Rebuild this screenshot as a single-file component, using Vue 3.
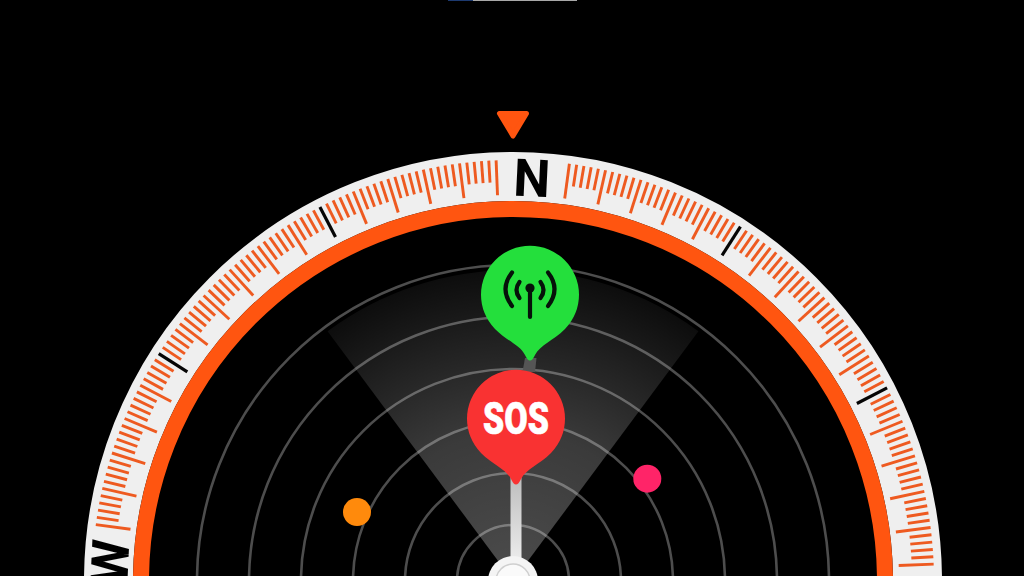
<template>
  <div class="screen">
    <svg class="dial" viewBox="0 0 1024 576" width="1024" height="576">
      <defs>
        <radialGradient id="coneFill" gradientUnits="userSpaceOnUse" :cx="cx" :cy="cy" r="312">
          <stop offset="0" stop-color="#fff" stop-opacity="0.3" />
          <stop offset="0.48" stop-color="#fff" stop-opacity="0.23" />
          <stop offset="1" stop-color="#fff" stop-opacity="0.05" />
        </radialGradient>
        <linearGradient id="stemFill" x1="0" y1="0" x2="0" y2="1">
          <stop offset="0" stop-color="#bdbdbd" />
          <stop offset="1" stop-color="#f0f0f0" />
        </linearGradient>
      </defs>

      <!-- top edge of the video frame -->
      <rect class="top-blue" x="448" y="0" width="25" height="1" />
      <rect class="top-grey" x="473" y="0" width="104" height="1" />

      <!-- heading marker -->
      <path class="marker" d="M499.5 113.5 H526.5 L513 136 Z" />

      <!-- bezel -->
      <circle class="band" :cx="cx" :cy="cy" r="404.5" />
      <circle class="ring-orange" :cx="cx" :cy="cy" r="372" />
      <line
        v-for="t in ticks"
        :key="t.deg"
        :class="t.cls"
        :x1="t.x1"
        :y1="t.y1"
        :x2="t.x2"
        :y2="t.y2"
      />
      <text
        v-for="c in cardinals"
        :key="c.label"
        class="cardinal"
        :x="c.x"
        :y="c.y"
        :transform="`rotate(${c.deg} ${c.x} ${c.y})`"
        text-anchor="middle"
      >{{ c.label }}</text>

      <!-- radar -->
      <path class="cone" fill="url(#coneFill)" :d="conePath" />
      <circle v-for="r in rings" :key="r" class="ring" :cx="cx" :cy="cy" :r="r" />

      <circle class="dot-orange" cx="357" cy="512" r="14" />
      <circle class="dot-pink" cx="647.3" cy="478.7" r="14" />

      <!-- links between pins -->
      <path class="link" d="M525 358 L536.5 358 L535 372 L522.5 372 Z" />
      <rect x="510.5" y="476" width="11" height="92" fill="url(#stemFill)" />

      <!-- centre knob -->
      <circle class="knob" :cx="cx" :cy="cy" r="25" />
      <circle class="knob-inner" :cx="cx" :cy="cy" r="17" />

      <!-- green pin -->
      <g transform="translate(530 295)">
        <path class="pin-green" :d="pinPath" />
        <circle class="ant-dot" cx="0" cy="-7" r="4.6" />
        <line class="ant" x1="0" y1="-6" x2="0" y2="22" />
        <path class="ant" d="M-10.5 -13 Q-16.5 -5 -10.5 3" />
        <path class="ant" d="M10.5 -13 Q16.5 -5 10.5 3" />
        <path class="ant" d="M-18 -22.5 Q-31 -6 -18 11" />
        <path class="ant" d="M18 -22.5 Q31 -6 18 11" />
      </g>

      <!-- red pin -->
      <g transform="translate(516 419)">
        <path class="pin-red" :d="pinPath" />
        <text class="sos" x="0" y="15" text-anchor="middle" textLength="66" lengthAdjust="spacingAndGlyphs">SOS</text>
      </g>
    </svg>
  </div>
</template>

<script setup>
const cx = 513;
const cy = 581;
const north = 2.7;
const rings = [56, 108, 160, 212, 264, 316];

// pin: circle that pulls in to a small rounded tip
const pinPath =
  "M-35 34 A49 49 0 1 1 35 34 C23 46 10 50 5 60 Q2.5 65.5 0 65.5 Q-2.5 65.5 -5 60 C-10 50 -23 46 -35 34 Z";

const polar = (deg, r) => {
  const a = (deg * Math.PI) / 180;
  return { x: cx + r * Math.sin(a), y: cy - r * Math.cos(a) };
};

const ticks = [];
for (let i = 0; i < 360; i++) {
  const m = i % 90;
  if (m < 5 || m > 85) continue;
  const black = i % 30 === 0;
  const major = i % 5 === 0;
  const inner = black ? 387 : major ? 386 : 399;
  const a = polar(i + north, inner);
  const b = polar(i + north, 421);
  ticks.push({
    deg: i,
    cls: black ? "tick-black" : "tick",
    x1: a.x,
    y1: a.y,
    x2: b.x,
    y2: b.y,
  });
}

// only N and W reach into the frame
const cardinals = [
  { label: "N", deg: north },
  { label: "W", deg: north - 90 },
].map((c) => {
  const p = polar(c.deg, 385);
  return { ...c, x: p.x, y: p.y };
});

const half = 36.6;
const c1 = polar(-half, 311);
const c2 = polar(half, 311);
const conePath = `M${cx} ${cy} L${c1.x} ${c1.y} A311 311 0 0 1 ${c2.x} ${c2.y} Z`;
</script>

<style>
html,
body {
  background: #000;
}
</style>

<style scoped>
.screen {
  width: 1024px;
  height: 576px;
  background: #000;
  overflow: hidden;
}

.dial {
  display: block;
}

.top-blue {
  fill: #1d3a70;
}

.top-grey {
  fill: #a8a8a8;
}

.marker {
  fill: #ff5510;
  stroke: #ff5510;
  stroke-width: 5;
  stroke-linejoin: round;
}

.band {
  fill: none;
  stroke: #efefef;
  stroke-width: 49;
}

.ring-orange {
  fill: none;
  stroke: #ff5510;
  stroke-width: 16;
}

.tick {
  stroke: #ee5a20;
  stroke-width: 2.9;
}

.tick-black {
  stroke: #050505;
  stroke-width: 3.2;
}

.cardinal {
  font-family: Roboto, "Liberation Sans", sans-serif;
  font-weight: 700;
  font-size: 52px;
  fill: #000;
}

.ring {
  fill: none;
  stroke: #fff;
  stroke-opacity: 0.3;
  stroke-width: 2.6;
}

.dot-orange {
  fill: #ff8a0c;
}

.dot-pink {
  fill: #ff2468;
}

.link {
  fill: #555;
}

.knob {
  fill: #f4f4f4;
}

.knob-inner {
  fill: #fafafa;
  stroke: #cfcfcf;
  stroke-width: 1.5;
}

.pin-green {
  fill: #24df3c;
}

.pin-red {
  fill: #f93232;
}

.ant {
  fill: none;
  stroke: #06120a;
  stroke-width: 4.2;
  stroke-linecap: round;
}

.ant-dot {
  fill: #06120a;
}

.sos {
  font-family: Roboto, "Liberation Sans", sans-serif;
  font-weight: 900;
  font-size: 44px;
  fill: #fff;
  stroke: #fff;
  stroke-width: 0.6;
}
</style>
